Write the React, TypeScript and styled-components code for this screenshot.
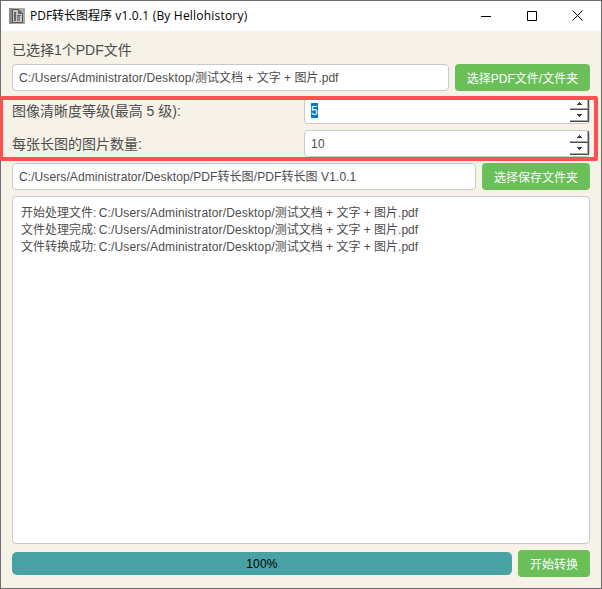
import React from 'react';
import styled, { createGlobalStyle } from 'styled-components';

const GlobalStyle = createGlobalStyle`
  * { box-sizing: border-box; }
  body { margin: 0; overflow: hidden; background: #747276; }
`;

const Window = styled.main`
  position: relative;
  display: flex;
  flex-direction: column;
  width: 602px;
  height: 589px;
  border: 1px solid #6e6c70;
  background: #f6f2e7;
  color: #4c4c4c;
  font: 12px/17px "Liberation Sans", "Noto Sans CJK SC", sans-serif;
  white-space: nowrap;
`;

const TitleBar = styled.header`
  display: flex;
  align-items: center;
  flex: 0 0 30px;
  padding: 0 1px 0 8px;
  background: #fff;
  color: #000;
`;

const Title = styled.h1`
  flex: 1;
  margin: 0 0 0 5px;
  font: 400 12px/18px "Open Sans", "Noto Sans CJK SC", sans-serif;
`;

const Run = styled.span<{ $spacing?: number }>`
  letter-spacing: ${({ $spacing = 0 }) => $spacing}px;
`;

const WindowButton = styled.button`
  display: grid;
  place-items: center;
  width: 45.5px;
  height: 30px;
  padding: 0 0 1px;
  border: 0;
  background: none;
`;

const Content = styled.div`
  display: flex;
  flex: 1;
  flex-direction: column;
  gap: 6px;
  padding: 10px 11px 11px;
`;

const Status = styled.div`
  height: 17px;
  font-size: 14px;
  line-height: 18px;
`;

const Row = styled.div`
  display: flex;
  flex: 0 0 27px;
  align-items: stretch;
  gap: 6px;
`;

const Field = styled.div`
  display: flex;
  flex: 1;
  align-items: center;
  padding: 2px 6px 0;
  border: 1px solid #c9c9cb;
  border-radius: 4px;
  background: #fff;
`;

const ActionButton = styled.button<{ $width: number }>`
  flex: 0 0 ${({ $width }) => $width}px;
  padding: 3px 0 0;
  border: 0;
  border-radius: 4px;
  background: #6abf59;
  color: #fff;
  font: inherit;
`;

const Settings = styled.section`
  display: flex;
  flex-direction: column;
  gap: 6px;
`;

const SettingRow = styled.div`
  display: grid;
  grid-template-columns: 292px 1fr;
  height: 27px;
`;

const SettingLabel = styled.label`
  padding-top: 5px;
  font-size: 14px;
  line-height: 18px;
`;

const SpinField = styled(Field)`
  justify-content: space-between;
  padding: 0 0 0 6px;
`;

const SpinValue = styled.span`
  padding-top: 2px;
  letter-spacing: 0.4px;
`;

const Selected = styled.span`
  height: 15px;
  line-height: 16px;
  background: #0078d7;
  color: #fff;
`;

const Stepper = styled.div`
  display: flex;
  flex-direction: column;
  align-self: flex-start;
  width: 19px;
  height: 24px;
`;

const Step = styled.span`
  display: grid;
  flex: 1;
  place-items: center;
  border-right: 1px solid #555;
  border-bottom: 1px solid #4c4c4c;
  box-shadow: inset -1px -1px #a8a8a8;
`;

const Log = styled.div`
  flex: 1;
  padding: 8px;
  border: 1px solid #c9c9cb;
  border-radius: 4px;
  background: #fff;
`;

const Footer = styled(Row)`
  align-items: center;
`;

const Progress = styled.div`
  display: grid;
  flex: 1;
  height: 23px;
  padding-top: 1px;
  place-items: center;
  border-radius: 5px;
  background: #48a1a3;
  color: #000;
  letter-spacing: 0.2px;
`;

const FooterButton = styled(ActionButton)`
  height: 27px;
`;

const Highlight = styled.div`
  position: absolute;
  top: 95px;
  left: -1px;
  width: 598px;
  height: 65px;
  border: 4px solid #ff5151;
  border-left-width: 3px;
  border-radius: 2px;
  pointer-events: none;
`;

const AppIcon = () => (
  <svg width="16" height="16" viewBox="0 0 16 16" shapeRendering="crispEdges">
    <path fill="#a9a9a9" d="M0 0h16v16H0z" />
    <path fill="#8b8b8b" d="M0 0h3v16H0z" />
    <path fill="#555" d="M3 1h7v1H4v12h9V5h1v10H3z" />
    <path fill="#c5c5c5" d="M4 2h5v3h4v9H4z" />
    <path fill="#666" d="M5 4h2v9H5zM9 2h2v1h1v1h1v2H9zM8 7h4v1H8z" />
    <path fill="#888" d="M8 8h3v5H8z" />
  </svg>
);

const Arrow = ({ up = false }: { up?: boolean }) => (
  <svg width="5" height="3" viewBox="0 0 5 3" shapeRendering="crispEdges">
    <path fill="#3d3d3d" d={up ? 'M2 0h1v1h1v1h1v1H0V2h1V1h1z' : 'M0 0h5v1H4v1H3v1H2V2H1V1H0z'} />
  </svg>
);

const Steps = () => (
  <Stepper>
    <Step><Arrow up /></Step>
    <Step><Arrow /></Step>
  </Stepper>
);

const FilePath = () => (
  <>
    <Run $spacing={0.15}>C:/Users/Administrator/Desktop/</Run>测试文档 + 文字 + 图片.pdf
  </>
);

const messages = ['开始处理文件', '文件处理完成', '文件转换成功'];

export default function App() {
  return (
    <Window>
      <GlobalStyle />
      <TitleBar>
        <AppIcon />
        <Title>PDF转长图程序 <Run $spacing={0.2}>v1.0.1 (By Hellohistory)</Run></Title>
        <WindowButton aria-label="最小化">
          <svg width="10" height="10"><path d="M0 5.5h10" stroke="#000" /></svg>
        </WindowButton>
        <WindowButton aria-label="最大化">
          <svg width="10" height="10"><path d="M.5.5h9v9h-9z" fill="none" stroke="#000" /></svg>
        </WindowButton>
        <WindowButton aria-label="关闭">
          <svg width="11" height="11"><path d="m.5.5 10 10m0-10-10 10" stroke="#000" /></svg>
        </WindowButton>
      </TitleBar>
      <Content>
        <Status>已选择1个PDF文件</Status>
        <Row>
          <Field><div><FilePath /></div></Field>
          <ActionButton $width={135}>选择PDF文件/文件夹</ActionButton>
        </Row>
        <Settings>
          <SettingRow>
            <SettingLabel>图像清晰度等级(最高 5 级):</SettingLabel>
            <SpinField><Selected>5</Selected><Steps /></SpinField>
          </SettingRow>
          <SettingRow>
            <SettingLabel>每张长图的图片数量:</SettingLabel>
            <SpinField><SpinValue>10</SpinValue><Steps /></SpinField>
          </SettingRow>
        </Settings>
        <Row>
          <Field>
            <div><Run $spacing={0.09}>C:/Users/Administrator/Desktop/PDF转长图/PDF转长图 V1.0.1</Run></div>
          </Field>
          <ActionButton $width={108}>选择保存文件夹</ActionButton>
        </Row>
        <Log>
          {messages.map((message) => (
            <div key={message}>{message}<Run $spacing={-0.5}>: </Run><FilePath /></div>
          ))}
        </Log>
        <Footer>
          <Progress>100%</Progress>
          <FooterButton $width={72}>开始转换</FooterButton>
        </Footer>
      </Content>
      <Highlight />
    </Window>
  );
}
